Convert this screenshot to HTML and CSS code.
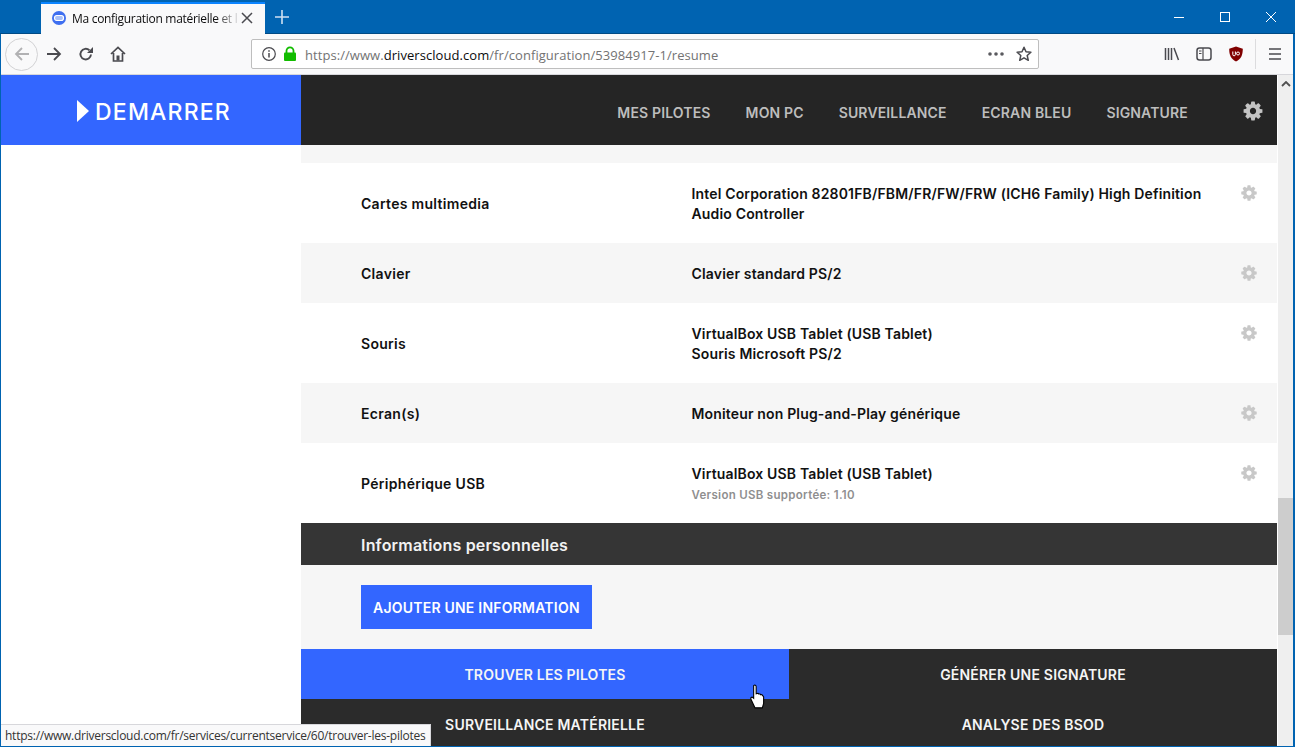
FILE: index.html
```html
<!DOCTYPE html>
<html>
  <head>
    <title>Ma configuration matérielle</title>
    <link rel="stylesheet" href="styles.css">
  </head>
  <body>
    <svg class="defs" width="0" height="0">
      <symbol id="cog" viewBox="0 0 1792 1792">
        <path d="M1152 896q0-106-75-181t-181-75-181 75-75 181 75 181 181 75 181-75 75-181zm512-109v222q0 12-8 23t-20 13l-185 28q-19 54-39 91 35 50 107 138 10 12 10 25t-9 23q-27 37-99 108t-94 71q-12 0-26-9l-138-108q-44 23-91 38-16 136-29 186-7 28-36 28h-222q-14 0-24.5-8.5t-11.5-21.5l-28-184q-49-16-90-37l-141 107q-10 9-25 9-14 0-25-11-126-114-165-168-7-10-7-23 0-12 8-23 15-21 51-66.5t54-70.5q-27-50-41-99l-183-27q-13-2-21-12.5t-8-23.5v-222q0-12 8-23t19-13l186-28q14-46 39-92-40-57-107-138-10-12-10-24 0-10 9-23 26-36 98.5-107.5t94.5-71.5q13 0 26 10l138 107q44-23 91-38 16-136 29-186 7-28 36-28h222q14 0 24.5 8.5t11.5 21.5l28 184q49 16 90 37l142-107q9-9 24-9 13 0 25 10 129 119 165 170 7 8 7 22 0 12-8 23-15 21-51 66.5t-54 70.5q26 50 41 98l183 28q13 2 21 12.5t8 23.5z"/>
      </symbol>
    </svg>

    <div class="window">
      <div class="titlebar">
        <div class="tab">
          <svg class="favicon" width="16" height="16" viewBox="0 0 16 16"><circle cx="8" cy="8" r="7" fill="#3f6ff0"/><rect x="3.500" y="5.500" width="9" height="5" rx="2.200" fill="#a9c0f8" stroke="#fff" stroke-width="1.200"/></svg>
          <span class="tab-title">Ma configuration matérielle et l</span>
          <svg class="tab-close" width="12" height="12" viewBox="0 0 12 12"><path d="M1 1l10 10M11 1L1 11" stroke="#4a4a4f" stroke-width="1.500"/></svg>
        </div>
        <svg class="newtab" width="14" height="14" viewBox="0 0 14 14"><path d="M7 0v14M0 7h14" stroke="#cfe0f2" stroke-width="1.600"/></svg>
        <div class="win-btns">
          <svg width="12" height="12" viewBox="0 0 12 12"><path d="M1 6.500h10" stroke="#fff"/></svg>
          <svg width="12" height="12" viewBox="0 0 12 12"><rect x="1.500" y="1.500" width="9" height="9" fill="none" stroke="#fff"/></svg>
          <svg width="12" height="12" viewBox="0 0 12 12"><path d="M1 1l10 10M11 1L1 11" stroke="#fff"/></svg>
        </div>
      </div>

      <div class="toolbar">
        <div class="nav-btns">
          <span class="back">
            <svg width="18" height="18" viewBox="0 0 18 18"><path d="M16 9H3M9 3L3 9l6 6" fill="none" stroke="#b1b1b3" stroke-width="1.800"/></svg>
          </span>
          <svg width="18" height="18" viewBox="0 0 18 18"><path d="M2 9h13M9 3l6 6-6 6" fill="none" stroke="#4a4a4f" stroke-width="1.800"/></svg>
          <svg class="reload" width="16" height="16" viewBox="0 0 16 16"><path d="M13 8.500a5.300 5.300 0 1 1-1.600-4.200" fill="none" stroke="#4a4a4f" stroke-width="1.900"/><path d="M15 1v6H9z" fill="#4a4a4f"/></svg>
          <svg class="home" width="16" height="16" viewBox="0 0 16 16"><path d="M1 8l7-6.500L15 8M3.500 7v8h9V7" fill="none" stroke="#4a4a4f" stroke-width="1.700"/><rect x="6.500" y="9.500" width="3" height="5" fill="#4a4a4f"/></svg>
        </div>
        <div class="urlbar">
          <svg width="16" height="16" viewBox="0 0 16 16"><circle cx="8" cy="8" r="6.300" fill="none" stroke="#4a4a4f" stroke-width="1.200"/><path d="M8 7v4.500M8 4.200v1.600" stroke="#4a4a4f" stroke-width="1.500"/></svg>
          <svg class="lock" width="14" height="16" viewBox="0 0 14 16"><path d="M3.500 7V4.800a3.500 3.500 0 0 1 7 0V7" fill="none" stroke="#12bc00" stroke-width="1.800"/><rect x="1" y="6.500" width="12" height="8.500" rx="1" fill="#12bc00"/></svg>
          <span class="url">https://www.<b>driverscloud.com</b>/fr/configuration/53984917-1/resume</span>
          <svg class="dots" width="16" height="4" viewBox="0 0 16 4"><circle cx="2" cy="2" r="1.800"/><circle cx="8" cy="2" r="1.800"/><circle cx="14" cy="2" r="1.800"/></svg>
          <svg width="16" height="16" viewBox="0 0 16 16"><path d="M8 1.300l2 4.500 4.900.500-3.700 3.200 1.100 4.800L8 11.800l-4.300 2.500 1.100-4.800L1.100 6.300 6 5.800z" fill="none" stroke="#4a4a4f" stroke-width="1.500" stroke-linejoin="round"/></svg>
        </div>
        <div class="tools">
          <svg width="16" height="16" viewBox="0 0 16 16"><path d="M1.500 2v12M4.500 2v12M7.500 2v12M10 2l4.500 12" fill="none" stroke="#4a4a4f" stroke-width="1.500"/></svg>
          <svg width="16" height="16" viewBox="0 0 16 16"><rect x="1" y="2" width="14" height="12" rx="2.500" fill="none" stroke="#4a4a4f" stroke-width="1.500"/><path d="M7 2v12M3 5h2.500M3 7.500h2.500" stroke="#4a4a4f" stroke-width="1.200"/></svg>
          <svg width="16" height="16" viewBox="0 0 16 16"><path d="M8 .5l6.800 2.200c0 6-1.600 10.300-6.800 12.800C2.800 13 1.200 8.700 1.200 2.700z" fill="#800000"/><path d="M4.800 5.500v3a1.300 1.300 0 0 0 2.600 0v-3" fill="none" stroke="#fff"/><circle cx="10" cy="7.500" r="1.500" fill="none" stroke="#fff"/></svg>
          <span class="tool-sep"></span>
          <svg width="14" height="14" viewBox="0 0 14 14"><path d="M1 2h12M1 7h12M1 12h12" stroke="#4a4a4f" stroke-width="1.500"/></svg>
        </div>
      </div>

      <div class="viewport">
        <div class="page">
          <header class="site-header">
            <div class="start"><span class="start-arrow"></span>DEMARRER</div>
            <nav class="site-nav">
              <a>MES PILOTES</a>
              <a>MON PC</a>
              <a>SURVEILLANCE</a>
              <a>ECRAN BLEU</a>
              <a>SIGNATURE</a>
              <svg class="nav-cog"><use href="#cog"/></svg>
            </nav>
          </header>

          <div class="body-row">
            <aside class="side"></aside>
            <main class="content">
              <div class="strip"></div>

              <div class="row tall">
                <div class="label">Cartes multimedia</div>
                <div class="value">Intel Corporation 82801FB/FBM/FR/FW/FRW (ICH6 Family) High Definition Audio Controller</div>
                <svg class="row-cog"><use href="#cog"/></svg>
              </div>
              <div class="row alt">
                <div class="label">Clavier</div>
                <div class="value">Clavier standard PS/2</div>
                <svg class="row-cog"><use href="#cog"/></svg>
              </div>
              <div class="row tall">
                <div class="label">Souris</div>
                <div class="value">VirtualBox USB Tablet (USB Tablet)<br>Souris Microsoft PS/2</div>
                <svg class="row-cog"><use href="#cog"/></svg>
              </div>
              <div class="row alt">
                <div class="label">Ecran(s)</div>
                <div class="value">Moniteur non Plug-and-Play générique</div>
                <svg class="row-cog"><use href="#cog"/></svg>
              </div>
              <div class="row tall">
                <div class="label">Périphérique USB</div>
                <div class="value">VirtualBox USB Tablet (USB Tablet)<small>Version USB supportée: 1.10</small></div>
                <svg class="row-cog"><use href="#cog"/></svg>
              </div>

              <h2 class="section-title">Informations personnelles</h2>
              <div class="section-body">
                <a class="add-btn">AJOUTER UNE INFORMATION</a>
              </div>

              <div class="actions">
                <a class="action active">TROUVER LES PILOTES</a>
                <a class="action">GÉNÉRER UNE SIGNATURE</a>
                <a class="action">SURVEILLANCE MATÉRIELLE</a>
                <a class="action">ANALYSE DES BSOD</a>
              </div>
            </main>
          </div>
        </div>

        <div class="scrollbar">
          <svg class="scroll-up" width="10" height="6" viewBox="0 0 10 6"><path d="M1 5l4-4 4 4" fill="none" stroke="#505050" stroke-width="1.800"/></svg>
          <div class="scroll-thumb"></div>
        </div>

        <svg class="cursor" width="18" height="26" viewBox="0 0 16 24"><path d="M4 1.500c1-1 2.300-.5 2.300 1V9l1-.3c.8-.2 1.300.1 1.500.6.800-.3 1.500 0 1.700.6.800-.3 1.600 0 1.800.8l.9 1.200v6.100l-1.200 4H5.200L1.500 14c-.6-1.300.7-2.400 1.800-1.500l.7.700z" fill="#fff" stroke="#000"/></svg>
        <div class="status">https://www.driverscloud.com/fr/services/currentservice/60/trouver-les-pilotes</div>
      </div>
    </div>
  </body>
</html>
```

FILE: styles.css
```css
* {
  box-sizing: border-box;
}

html,
body {
  margin: 0;
  height: 100%;
  overflow: hidden;
}

.defs {
  position: absolute;
}

.window {
  height: 747px;
  display: flex;
  flex-direction: column;
  border-left: 1px solid #0063b1;
  border-right: 2px solid #0063b1;
  border-bottom: 1px solid #0063b1;
  font-family: "Open Sans", sans-serif;
}

/* browser chrome */
.titlebar {
  height: 34px;
  margin: 0 -2px 0 -1px;
  background: #0063b1;
  border-bottom: 1px solid #004a85;
  display: flex;
  align-items: flex-end;
  padding-left: 41px;
}

.tab {
  width: 224px;
  height: 32px;
  background: #f9f9fa;
  border-top: 2px solid #0a84ff;
  margin-bottom: -1px;
  display: flex;
  align-items: center;
  padding: 0 12px 2px 10px;
  font-size: 12px;
  color: #0c0c0d;
}

.tab-title {
  flex: 1;
  margin-left: 5px;
  letter-spacing: -0.3px;
  white-space: nowrap;
  -webkit-mask-image: linear-gradient(to right, #000 85%, transparent);
  mask-image: linear-gradient(to right, #000 85%, transparent);
}

.newtab {
  margin: 0 0 9px 10px;
}

.win-btns {
  margin-left: auto;
  height: 33px;
  display: flex;
  align-items: center;
  gap: 34px;
  padding-right: 18px;
}

.toolbar {
  height: 41px;
  background: #f9f9fa;
  border-bottom: 1px solid #d7d7db;
  display: flex;
  align-items: center;
}

.nav-btns {
  width: 250px;
  display: flex;
  align-items: center;
  padding-left: 4px;
}

.back {
  width: 33px;
  height: 33px;
  border: 1px solid #d2d2d4;
  border-radius: 50%;
  display: flex;
  align-items: center;
  justify-content: center;
  margin-right: 7px;
}

.reload {
  margin-left: 15px;
}

.home {
  margin-left: 16px;
}

.urlbar {
  width: 788px;
  height: 30px;
  background: #fff;
  border: 1px solid #bebebe;
  border-radius: 2px;
  display: flex;
  align-items: center;
  padding: 0 6px 0 9px;
}

.lock {
  margin-left: 6px;
}

.url {
  flex: 1;
  margin-left: 8px;
  padding-top: 2px;
  font-size: 13px;
  letter-spacing: 0.06px;
  color: #737373;
  white-space: nowrap;
}

.url b {
  font-weight: 400;
  color: #0c0c0d;
}

.dots {
  fill: #5a5a5f;
  margin-right: 12px;
}

.tools {
  flex: 1;
  display: flex;
  align-items: center;
  padding-left: 125px;
  gap: 16px;
}

.tool-sep {
  width: 1px;
  height: 30px;
  background: #dcdcde;
  margin: 0 -4px 0 -5px;
}

/* page */
.viewport {
  flex: 1;
  min-height: 0;
  display: flex;
  position: relative;
}

.page {
  flex: 1;
  min-width: 0;
  overflow: hidden;
  display: flex;
  flex-direction: column;
  font-family: Inter, sans-serif;
}

.site-header {
  flex: none;
  height: 70px;
  display: flex;
  background: #252525;
}

.start {
  width: 300px;
  padding: 4px 0 0 6px;
  background: #3366ff;
  color: #fff;
  font-size: 23px;
  font-weight: 500;
  letter-spacing: 1.2px;
  display: flex;
  align-items: center;
  justify-content: center;
}

.start-arrow {
  border-left: 12px solid #fff;
  border-top: 11px solid transparent;
  border-bottom: 11px solid transparent;
  margin: -2px 6px 0 0;
}

.site-nav {
  flex: 1;
  display: flex;
  align-items: center;
  justify-content: flex-end;
  gap: 35px;
  padding: 4px 13px 0 0;
  color: #bdbdbd;
  font-size: 14px;
  font-weight: 600;
  letter-spacing: 0.15px;
}

.nav-cog {
  width: 22px;
  height: 22px;
  fill: #c4c4c4;
  margin: -3px 0 0 19px;
}

.body-row {
  flex: 1;
  min-height: 0;
  display: flex;
}

.side {
  width: 300px;
  background: #fff;
}

.content {
  flex: 1;
  min-width: 0;
}

.strip {
  height: 18px;
  background: #f6f6f6;
}

.row {
  display: flex;
  align-items: center;
  position: relative;
  padding: 2px 0 0 60px;
  background: #fff;
  color: #111;
  font-size: 14px;
  font-weight: 600;
  line-height: 20px;
}

.row.tall {
  height: 80px;
}

.row.alt {
  height: 60px;
  background: #f6f6f6;
}

.label {
  width: 330.500px;
  letter-spacing: 0.3px;
}

.value {
  width: 530px;
  letter-spacing: 0.16px;
}

.value small {
  display: block;
  color: #8f8f8f;
  font-size: 11.500px;
  letter-spacing: 0.3px;
  margin-top: 1px;
}

.row-cog {
  position: absolute;
  right: 19px;
  top: 21px;
  width: 18px;
  height: 18px;
  fill: #c8c8c8;
}

.section-title {
  margin: 0;
  height: 42px;
  padding-left: 60px;
  background: #353535;
  color: #f2f2f2;
  font-size: 16px;
  font-weight: 600;
  letter-spacing: 0.2px;
  line-height: 44px;
}

.section-body {
  height: 84px;
  background: #f6f6f6;
  padding: 20px 60px 0;
}

.add-btn {
  display: inline-block;
  height: 44px;
  padding: 0 12px;
  background: #3366ff;
  color: #fff;
  font-size: 14px;
  font-weight: 600;
  letter-spacing: 0.22px;
  line-height: 46px;
}

.actions {
  display: grid;
  grid-template-columns: 1fr 1fr;
  grid-auto-rows: 50px;
  background: #2b2b2b;
}

.action {
  display: flex;
  align-items: center;
  justify-content: center;
  padding-top: 1px;
  color: #f5f5f5;
  font-size: 14px;
  font-weight: 600;
  letter-spacing: 0.2px;
}

.action.active {
  background: #3366ff;
}

.scrollbar {
  flex: none;
  width: 15px;
  margin-left: 1px;
  background: #efefef;
  position: relative;
}

.scroll-up {
  position: absolute;
  left: 3px;
  top: 6px;
}

.scroll-thumb {
  position: absolute;
  left: 0;
  right: 0;
  top: 423px;
  height: 137px;
  background: #cdcdcd;
}

.cursor {
  position: absolute;
  left: 748px;
  top: 609px;
}

.status {
  position: absolute;
  left: 0;
  bottom: 0;
  height: 22px;
  padding: 0 5px 0 4px;
  background: #f9f9fa;
  border-top: 1px solid #d7d7db;
  border-right: 1px solid #d7d7db;
  color: #333;
  font-size: 12px;
  letter-spacing: -0.25px;
  line-height: 22px;
  white-space: nowrap;
}
```
